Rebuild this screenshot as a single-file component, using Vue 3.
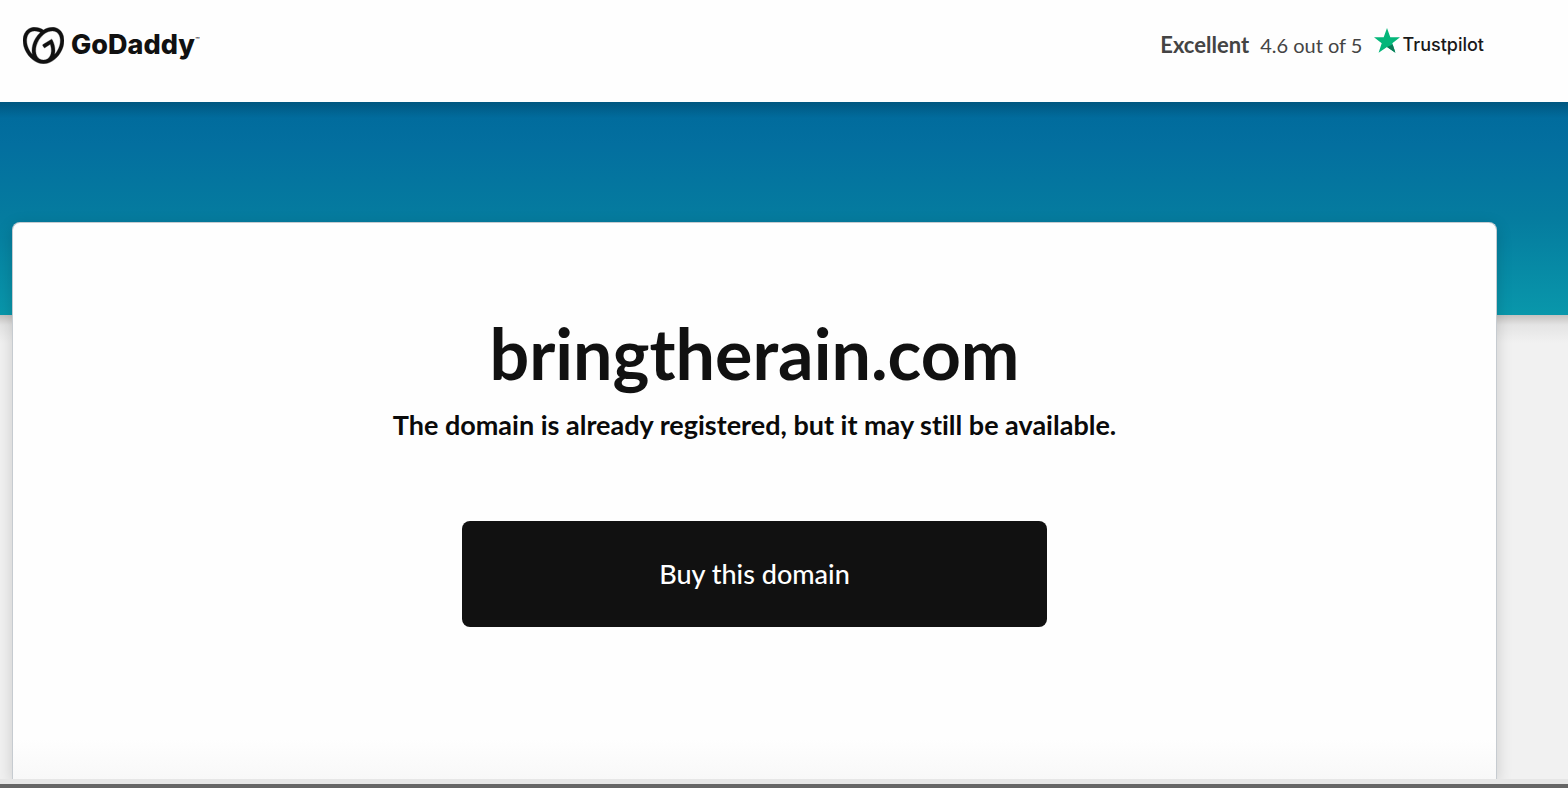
<script setup>
const domain = 'bringtherain.com'
const score = '4.6 out of 5'
</script>

<template>
  <div class="page">
    <header class="header">
      <a class="brand" href="#" aria-label="GoDaddy">
        <svg class="brand-mark" viewBox="0 1.3 24 21.4" aria-hidden="true">
          <path fill="currentColor" stroke="currentColor" stroke-width="0.2" d="M20.702 2.29c-2.494-1.554-5.778-1.187-8.706.654C9.076 1.104 5.79.736 3.3 2.29c-3.941 2.463-4.42 8.806-1.07 14.167 2.47 3.954 6.333 6.269 9.77 6.226 3.439.043 7.301-2.273 9.771-6.226 3.347-5.361 2.872-11.704-1.069-14.167zM4.042 15.328a12.838 12.838 0 01-1.546-3.541 10.12 10.12 0 01-.336-3.338c.15-1.98.956-3.524 2.27-4.345 1.315-.822 3.052-.87 4.903-.137.281.113.556.24.825.382A15.11 15.11 0 007.5 7.54c-2.035 3.255-2.655 6.878-1.945 9.765a13.247 13.247 0 01-1.514-1.98zm17.465-3.541a12.866 12.866 0 01-1.547 3.54 13.25 13.25 0 01-1.513 1.984c.635-2.589.203-5.76-1.353-8.734a.39.39 0 00-.563-.153l-4.852 3.032a.397.397 0 00-.126.546l.712 1.139a.395.395 0 00.547.126l3.145-1.965c.101.306.203.606.28.916.296 1.086.41 2.214.335 3.337-.15 1.982-.956 3.525-2.27 4.347a4.437 4.437 0 01-2.25.65h-.101a4.432 4.432 0 01-2.25-.65c-1.314-.822-2.121-2.365-2.27-4.347-.074-1.123.039-2.251.335-3.337a13.212 13.212 0 014.05-6.482 10.148 10.148 0 012.849-1.765c1.845-.733 3.586-.685 4.9.137 1.316.822 2.122 2.365 2.271 4.345a10.146 10.146 0 01-.33 3.334z" />
        </svg>
        <span class="brand-name">GoDaddy</span><span class="brand-tm">™</span>
      </a>
      <div class="rating">
        <strong class="rating-word">Excellent</strong>
        <span class="rating-score">{{ score }}</span>
        <a class="trustpilot" href="#">
          <svg class="star" viewBox="0 0 26 25" aria-hidden="true">
            <path fill="#04b67a" d="M13 0l3.300 9.200H26l-7.700 6.100 3.100 9.400-8.400-5.600-8.400 5.600 3.100-9.400L0 9.200h9.700z" />
            <path fill="#0b7a56" d="M18.700 16.600L21.400 24.700 13 19.100z" />
          </svg>
          <span>Trustpilot</span>
        </a>
      </div>
    </header>
    <main class="stage">
      <section class="card">
        <h1 class="domain">{{ domain }}</h1>
        <p class="note">The domain is already registered, but it may still be available.</p>
        <button class="buy" type="button">Buy this domain</button>
      </section>
    </main>
    <footer class="edge"></footer>
  </div>
</template>

<style>
body {
  margin: 0;
}
</style>

<style scoped>
.page {
  display: flex;
  flex-direction: column;
  min-height: 100vh;
  font-family: Lato, "Liberation Sans", sans-serif;
  font-variant-ligatures: none;
  color: #111;
  background: #fff;
}

.header {
  display: flex;
  align-items: center;
  justify-content: space-between;
  box-sizing: border-box;
  height: 102px;
  padding: 0 84px 12px 23px;
  background: #fefefe;
}

.brand {
  display: flex;
  align-items: center;
  color: #111;
  text-decoration: none;
}

.brand-mark {
  width: 41px;
  height: 37px;
  margin-right: 7px;
}

.brand-name {
  font: 800 27px/36px Inter, sans-serif;
}

.brand-tm {
  align-self: flex-start;
  font-size: 6px;
  line-height: 24px;
}

.rating {
  display: flex;
  align-items: center;
  color: #444;
  font-size: 20px;
  line-height: 24px;
}

.rating-word {
  margin-right: 11px;
  font-size: 22px;
  font-weight: 700;
}

.rating-score {
  margin-right: 12px;
}

.trustpilot {
  display: flex;
  align-items: center;
  gap: 2px;
  color: #191919;
  font: 500 18px/24px Inter, sans-serif;
  text-decoration: none;
}

.star {
  width: 26px;
  height: 25px;
  margin-bottom: 10px;
}

.stage {
  display: flex;
  flex: 1;
  padding: 120px 71px 0 12px;
  background:
    linear-gradient(rgba(0, 0, 0, 0.18), rgba(0, 0, 0, 0) 16px) 0 0 / 100% 213px no-repeat,
    linear-gradient(#006a9c, #036f9f 20%, #057c9f 55%, #0997ab) 0 0 / 100% 213px no-repeat,
    linear-gradient(#c4c2c0, #e4e4e4 10px, #f1f1f1 28px) 0 213px / 100% 100% no-repeat;
}

.card {
  display: flex;
  flex: 1;
  flex-direction: column;
  align-items: center;
  box-sizing: border-box;
  padding: 90px 24px 40px;
  border: 1px solid #c6cbd0;
  border-bottom: 0;
  border-radius: 8px 8px 0 0;
  background: linear-gradient(#fefefe calc(100% - 40px), #f8f8f8);
  box-shadow: 0 4px 16px rgba(0, 0, 0, 0.16);
}

.domain {
  margin: 0;
  font-size: 70px;
  font-weight: 700;
  line-height: 80px;
}

.note {
  margin: 16px 0 0;
  color: #0a0a0a;
  font-size: 27px;
  font-weight: 700;
  line-height: 32px;
}

.buy {
  width: 100%;
  max-width: 585px;
  height: 106px;
  margin-top: 80px;
  border: 0;
  border-radius: 8px;
  background: #111;
  color: #fff;
  font: 500 27px/32px Lato, "Liberation Sans", sans-serif;
  cursor: pointer;
}

.edge {
  height: 4px;
  border-top: 5px solid #e6e6e6;
  background: #656565;
}
</style>
